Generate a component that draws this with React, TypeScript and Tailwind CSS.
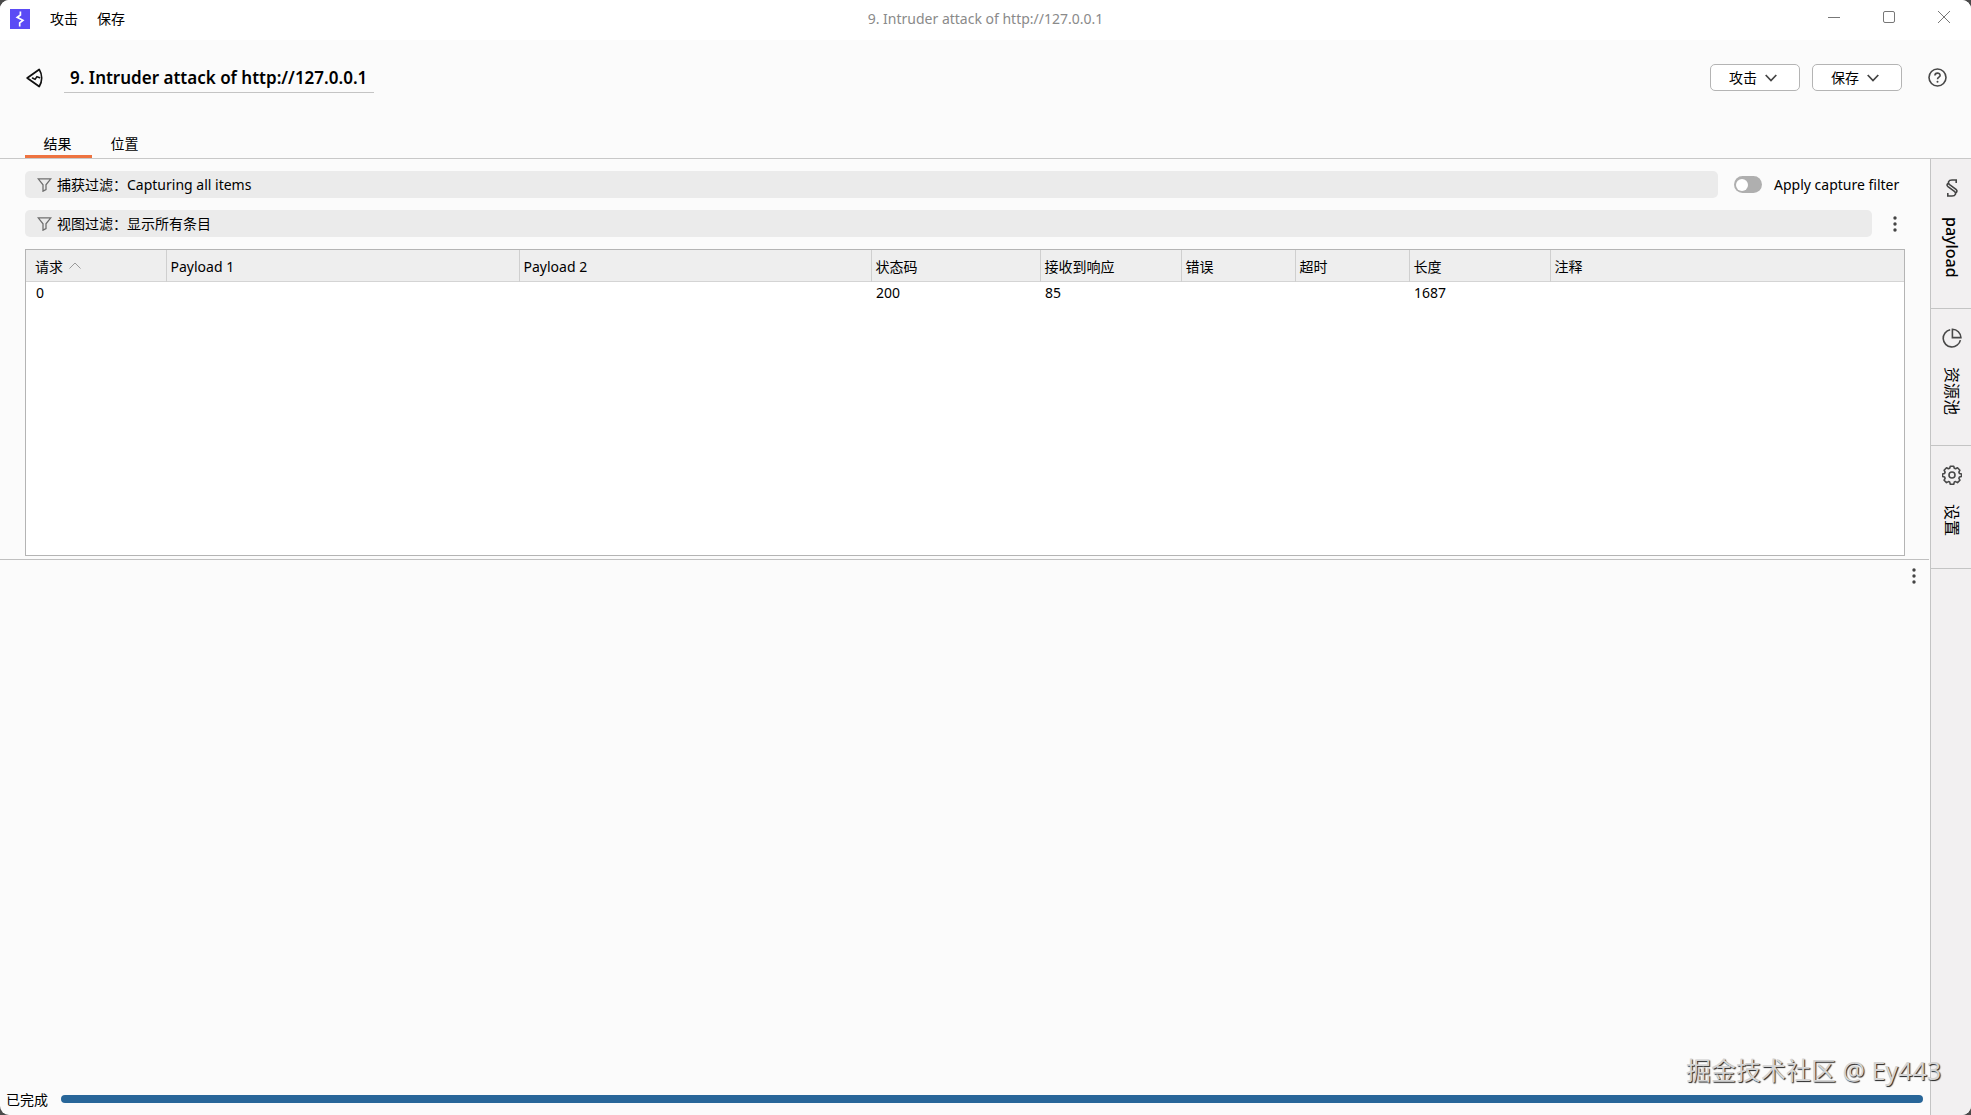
import React from 'react';

const columns = [
  { name: '请求', value: '0', width: 'w-[140px]', sorted: true },
  { name: 'Payload 1', value: '', width: 'w-[353px]' },
  { name: 'Payload 2', value: '', width: 'w-[352px]' },
  { name: '状态码', value: '200', width: 'w-[169px]' },
  { name: '接收到响应', value: '85', width: 'w-[141px]' },
  { name: '错误', value: '', width: 'w-[114px]' },
  { name: '超时', value: '', width: 'w-[114px]' },
  { name: '长度', value: '1687', width: 'w-[141px]' },
  { name: '注释', value: '', width: '' },
];

function Logo() {
  return (
    <svg className="mr-px size-5" viewBox="0 0 20 20" aria-hidden="true">
      <rect width="20" height="20" fill="#5b4bf5" />
      <path d="M10.400 2.400V6L7.200 8.300l5.700 3L9.700 13.800v3.800" fill="none" stroke="#fff" strokeWidth="1.700" />
    </svg>
  );
}

function AttackIcon() {
  return (
    <svg className="h-5 w-[18px]" viewBox="0 0 18 20" fill="none" stroke="#111" strokeWidth="1.800" strokeLinejoin="round" strokeLinecap="round" aria-hidden="true">
      <path d="M1.200 10 13.200 1.400C16.400 6.600 16.400 13.400 13.200 18.600Z" />
      <path d="M6.500 10l2.600 1.400 1.800-2.800 2.800 1.200" strokeWidth="1.500" />
    </svg>
  );
}

function Chevron() {
  return (
    <svg className="h-2 w-3" viewBox="0 0 12 8" fill="none" stroke="#444" strokeWidth="1.700" aria-hidden="true">
      <path d="M.7 1 6 6.600 11.300 1" />
    </svg>
  );
}

function Funnel() {
  return (
    <svg className="h-[14px] w-[15px] shrink-0" viewBox="0 0 15 14" fill="none" stroke="#707070" strokeWidth="1.300" aria-hidden="true">
      <path d="M1.200.8h12.600L9 6.800v4.900l-3 1.500V6.800Z" />
    </svg>
  );
}

function Dots() {
  return (
    <svg className="h-4 w-1" viewBox="0 0 4 16" fill="#444" aria-hidden="true">
      <circle cx="2" cy="2" r="1.700" />
      <circle cx="2" cy="8" r="1.700" />
      <circle cx="2" cy="14" r="1.700" />
    </svg>
  );
}

function HelpIcon() {
  return (
    <svg className="size-[19px]" viewBox="0 0 19 19" fill="none" stroke="#484848" strokeWidth="1.600" aria-hidden="true">
      <circle cx="9.500" cy="9.500" r="8.500" />
      <path d="M6.900 7.600c0-3.300 5.200-3.300 5.200-.2 0 1.800-2.600 1.700-2.600 3.900" />
      <circle cx="9.500" cy="13.700" r="1" fill="#484848" stroke="none" />
    </svg>
  );
}

function SectionIcon() {
  return (
    <svg className="h-5 w-[14px]" viewBox="0 0 14 20" fill="none" stroke="#444" strokeWidth="1.600" aria-hidden="true">
      <path d="M11.200 5V2H7C3.200 2 2.400 5 4.600 6.700L11 11.300c1.800 1.600.8 3.400-1 3.400" />
      <path d="M2.800 15v3H7c3.800 0 4.600-3 2.400-4.700L3 8.700C1.200 7.100 2.200 5.300 4 5.300" />
    </svg>
  );
}

function PieIcon() {
  return (
    <svg className="size-5" viewBox="0 0 20 20" fill="none" stroke="#484848" strokeWidth="1.600" aria-hidden="true">
      <path d="M8.200 1.700a8.700 8.700 0 1 0 10.200 10.400" />
      <path d="M10.400 1.300v8.300h8.500a8.500 8.500 0 0 0-8.500-8.300Z" />
    </svg>
  );
}

function GearIcon() {
  return (
    <svg className="size-5" viewBox="0 0 20 20" fill="none" stroke="#484848" strokeWidth="1.600" strokeLinejoin="round" aria-hidden="true">
      <path d="M8.300 1.200h3.400l.6 2.100 1.300.5 1.900-1 2.400 2.400-1 1.900.5 1.300 2.100.6v2.400l-2.100.6-.5 1.300 1 1.900-2.400 2.400-1.900-1-1.300.5-.6 2.100H8.300l-.6-2.100-1.300-.5-1.900 1-2.400-2.400 1-1.900-.5-1.300-2.100-.6V9l2.100-.6.5-1.300-1-1.900 2.400-2.400 1.900 1 1.300-.5Z" />
      <circle cx="10" cy="10" r="3" />
    </svg>
  );
}

function FilterBar({ label, children }: { label: string; children: string }) {
  return (
    <button className="flex h-[27px] flex-1 items-center gap-1 rounded-[5px] bg-[#ebebeb] pl-3 text-left">
      <Funnel />
      <span className="pl-px">{label}：{children}</span>
    </button>
  );
}

function SideTab({ icon, label, className }: { icon: React.ReactNode; label: string; className: string }) {
  return (
    <button className={'flex w-full flex-col items-center border-b border-[#c4c4c4] pt-[19px] pl-[2px] ' + className}>
      <span className="flex h-5 items-center">{icon}</span>
      <span className="mt-[19px] [writing-mode:vertical-rl] [text-orientation:sideways]">{label}</span>
    </button>
  );
}

export default function App() {
  return (
    <div className="bg-[#4a4a4a]">
      <div className="relative flex min-h-screen flex-col overflow-hidden rounded-[9px] bg-[#fbfbfb] font-['Noto_Sans','Noto_Sans_CJK_SC',sans-serif] text-sm leading-5 text-black">
        <header className="grid h-10 grid-cols-3 items-center bg-white px-[10px] pb-[2px]">
          <nav className="flex items-center gap-[19px]">
            <Logo />
            <button>攻击</button>
            <button>保存</button>
          </nav>
          <span className="text-center text-[#8a8a8a]">9. Intruder attack of http://127.0.0.1</span>
          <div className="flex items-center justify-end gap-[43px] pr-[11px] pb-1">
            <button aria-label="Minimize">
              <svg className="size-3" viewBox="0 0 12 12" stroke="#777"><path d="M0 6.500h12" /></svg>
            </button>
            <button aria-label="Maximize">
              <svg className="size-3" viewBox="0 0 12 12" fill="none" stroke="#777"><rect x=".5" y=".5" width="11" height="11" rx="1.500" /></svg>
            </button>
            <button aria-label="Close">
              <svg className="size-3" viewBox="0 0 12 12" stroke="#777"><path d="M0 0 12 12M12 0 0 12" /></svg>
            </button>
          </div>
        </header>

        <section className="flex h-[75px] items-center pr-6 pl-[26px]">
          <AttackIcon />
          <input
            aria-label="Attack name"
            defaultValue="9. Intruder attack of http://127.0.0.1"
            className="ml-5 h-[31px] w-[310px] border-b border-[#c4c4c4] bg-transparent px-[6px] text-[17px] font-semibold outline-none"
          />
          <div className="ml-auto flex items-center gap-3">
            <button className="flex h-[27px] w-[90px] items-center justify-center gap-2 rounded-[5px] border border-[#b4b4b4] bg-white pr-1">攻击<Chevron /></button>
            <button className="flex h-[27px] w-[90px] items-center justify-center gap-2 rounded-[5px] border border-[#b4b4b4] bg-white pr-1">保存<Chevron /></button>
            <button aria-label="Help" className="ml-[14px]"><HelpIcon /></button>
          </div>
        </section>

        <div role="tablist" className="flex h-11 items-end border-b border-[#c8c8c8] pl-[25px]">
          <button role="tab" aria-selected="true" className="h-7 w-[67px] border-b-3 border-[#ee7340] pt-[2px] pr-[2px]">结果</button>
          <button role="tab" aria-selected="false" className="h-7 w-[67px] border-b-3 border-transparent pt-[2px] pr-[2px]">位置</button>
        </div>

        <div className="flex flex-1">
          <main className="flex min-w-0 flex-1 flex-col">
            <div className="mr-px flex h-[401px] flex-col gap-3 border-b border-[#c0c0c0] pt-3 pr-6 pb-[3px] pl-[25px]">
              <div className="flex items-center">
                <FilterBar label="捕获过滤">Capturing all items</FilterBar>
                <label className="ml-4 flex w-[171px] items-center gap-3">
                  <input
                    type="checkbox"
                    role="switch"
                    className="flex h-[17px] w-7 appearance-none items-center rounded-full bg-[#afafaf] pl-[2px] before:size-3 before:rounded-full before:bg-white"
                  />
                  Apply capture filter
                </label>
              </div>
              <div className="flex items-center">
                <FilterBar label="视图过滤">显示所有条目</FilterBar>
                <button aria-label="View options" className="mr-2 ml-[21px]"><Dots /></button>
              </div>
              <div className="flex-1 border border-[#b4b4b4] bg-white">
                <table className="w-full table-fixed border-collapse text-left">
                  <thead>
                    <tr className="h-[31px] border-b border-[#d4d4d4] bg-[#eeeeee]">
                      {columns.map((c, i) => (
                        <th key={c.name} aria-sort={c.sorted ? 'ascending' : undefined} className={'border-r border-[#cfcfcf] pt-1 font-normal last:border-r-0 ' + (i === 0 ? 'pl-[9px] ' : 'pl-1 ') + c.width}>
                          {c.sorted ? (
                            <span className="flex items-center gap-[6px]">
                              {c.name}
                              <svg className="mb-1 h-[7px] w-3" viewBox="0 0 12 7" fill="none" stroke="#999" aria-hidden="true"><path d="M.5 6.500 6 1l5.500 5.500" /></svg>
                            </span>
                          ) : c.name}
                        </th>
                      ))}
                    </tr>
                  </thead>
                  <tbody>
                    <tr className="h-6">
                      {columns.map((c, i) => (
                        <td key={c.name} className={i === 0 ? 'pl-[10px]' : 'pl-[5px]'}>{c.value}</td>
                      ))}
                    </tr>
                  </tbody>
                </table>
              </div>
            </div>
            <div className="flex flex-1 justify-end pt-2 pr-[14px]">
              <button aria-label="Panel options" className="h-4"><Dots /></button>
            </div>
            <footer className="flex h-8 items-center gap-[13px] pr-[7px] pl-[6px]">
              <span className="pt-px">已完成</span>
              <progress
                aria-label="Attack progress"
                value={1}
                max={1}
                className="h-2 min-w-0 flex-1 appearance-none overflow-hidden rounded-full [&::-webkit-progress-bar]:bg-[#dddddd] [&::-webkit-progress-value]:bg-[#286699]"
              />
            </footer>
          </main>
          <aside className="w-[41px] border-l border-[#c4c4c4] bg-[#f2f0f1]">
            <SideTab icon={<SectionIcon />} label="payload" className="h-[150px] text-base font-medium" />
            <SideTab icon={<PieIcon />} label="资源池" className="h-[137px] text-base" />
            <SideTab icon={<GearIcon />} label="设置" className="h-[123px] text-base" />
          </aside>
        </div>

        <div className="absolute right-[30px] bottom-[27px] text-[25px] leading-9 text-[#d4d4d4] [text-shadow:1px_1px_1px_#222]">掘金技术社区 @ Ey443</div>
      </div>
    </div>
  );
}
